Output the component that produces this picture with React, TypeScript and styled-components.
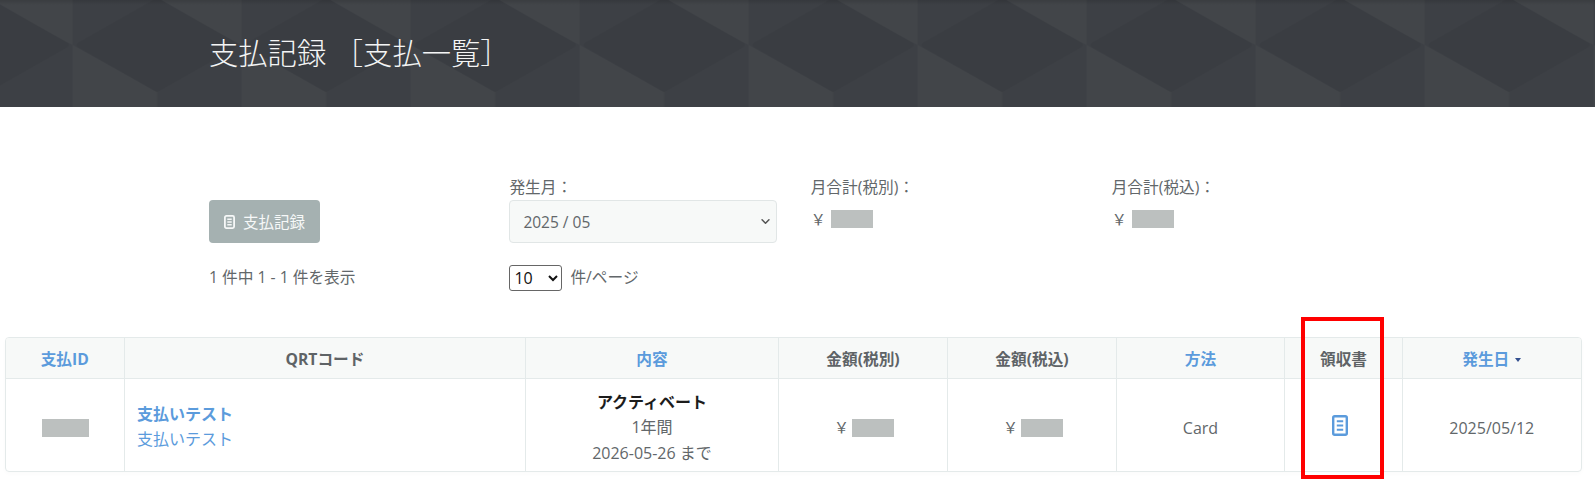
import React from "react";
import styled, { createGlobalStyle } from "styled-components";

const Global = createGlobalStyle`
  html { overflow: hidden; background: #fff; }
  html, body { margin: 0; padding: 0; }
  body { font-family: "Open Sans", "Noto Sans CJK JP", sans-serif; font-size: 16px; color: #62676a; }
`;

const Hero = styled.header`
  position: relative;
  height: 107px;
  background: #3d4045;
  display: flex;
  align-items: center;
  padding-left: 209px;
  overflow: hidden;
`;
const HeroPattern = styled.svg`
  position: absolute;
  inset: 0;
  width: 100%;
  height: 100%;
`;
const Title = styled.h1`
  position: relative;
  margin: 0;
  font-size: 29.3px;
  font-weight: 300;
  color: #f4f5f5;
  line-height: 1.2;
  white-space: pre;
`;

const Filters = styled.section`
  display: grid;
  grid-template-columns: 300.4px 301.3px 301px 301px;
  padding: 68px 0 0 209px;
`;
const Column = styled.div<{ $end?: boolean }>`
  display: flex;
  flex-direction: column;
  justify-content: ${(p) => (p.$end ? "flex-end" : "flex-start")};
  align-items: flex-start;
`;
const Label = styled.div`
  height: 25px;
  line-height: 24px;
  font-size: 15.7px;
`;
const RecordButton = styled.button`
  width: 111px;
  height: 43px;
  border: 0;
  border-radius: 4px;
  background: #a5b1b1;
  color: #f6f8f8;
  font: inherit;
  font-size: 15.5px;
  display: flex;
  align-items: center;
  justify-content: center;
  gap: 8px;
  padding: 0;
`;
const MonthSelect = styled.select`
  appearance: none;
  width: 268px;
  height: 43px;
  box-sizing: border-box;
  border: 1px solid #e1e6e6;
  border-radius: 4px;
  background-color: #f7f9f8;
  background-image: url("data:image/svg+xml,%3Csvg xmlns='http://www.w3.org/2000/svg' viewBox='0 0 16 16'%3E%3Cpath fill='none' stroke='%23555' stroke-width='2.2' stroke-linecap='round' stroke-linejoin='round' d='M3 5.5l5 5 5-5'/%3E%3C/svg%3E");
  background-repeat: no-repeat;
  background-position: right 5px center;
  background-size: 11px 11px;
  color: #62676a;
  font: inherit;
  font-size: 15.5px;
  padding: 0 13px;
`;
const Amount = styled.div`
  display: flex;
  align-items: center;
  height: 18px;
  margin-top: 10px;
`;
const Yen = styled.span<{ $gap?: number }>`
  font-size: 15px;
  line-height: 18px;
  margin-right: ${(p) => p.$gap ?? 5}px;
`;
const Redacted = styled.span<{ $w: number }>`
  display: inline-block;
  width: ${(p) => p.$w}px;
  height: 18px;
  background: #bcc0bf;
  vertical-align: middle;
`;

const Pager = styled.div`
  display: grid;
  grid-template-columns: 300.4px 1fr;
  align-items: center;
  padding: 22px 0 0 209px;
  height: 26px;
  font-size: 15.7px;
`;
const PageInfo = styled.div`
  margin-bottom: 3px;
`;
const PerPage = styled.div`
  display: flex;
  align-items: center;
  gap: 8px;
`;
const PerPageText = styled.span`
  margin-bottom: 3px;
`;
const SizeSelect = styled.select`
  width: 53px;
  height: 26px;
  font-size: 16px;
  font-family: inherit;
  color: #111;
  background: #fff;
  border: 1px solid #666;
  border-radius: 3px;
`;

const TableWrap = styled.div`
  position: relative;
  margin: 46px 0 0 4.5px;
  padding-bottom: 22px;
  width: 1575px;
`;
const Table = styled.table`
  width: 100%;
  table-layout: fixed;
  border-collapse: separate;
  border-spacing: 0;
  border: 1px solid #e4eaea;
  border-radius: 4px;
  box-sizing: border-box;
  overflow: hidden;
  box-shadow: 0 2px 4px rgba(0, 0, 0, 0.02);
`;
const Th = styled.th<{ $link?: boolean }>`
  height: 40px;
  padding: 0;
  background: #f7f9f8;
  font-size: 15.7px;
  font-weight: 700;
  color: ${(p) => (p.$link ? "#5b9bdc" : "#5e6366")};
  border-bottom: 1px solid #e4eaea;
  border-left: 1px solid #e4eaea;
  &:first-child { border-left: 0; }
`;
const Td = styled.td`
  height: 92px;
  box-sizing: border-box;
  padding: 6px 0 0;
  text-align: center;
  border-left: 1px solid #e4eaea;
  font-size: 16px;
  &:first-child { border-left: 0; }
`;
const NameCell = styled(Td)`
  padding: 4px 0 0 12px;
  text-align: left;
`;
const MaskedCell = styled(Td)`
  padding: 3px 0 0 2px;
`;
const IconCell = styled(Td)`
  padding-top: 5px;
`;
const CellLine = styled.div<{ $strong?: boolean; $link?: boolean }>`
  line-height: 25.5px;
  font-weight: ${(p) => (p.$strong ? 700 : 400)};
  color: ${(p) => (p.$link ? "#5b9bdc" : p.$strong ? "#1c1c1c" : "#62676a")};
`;
const Caret = styled.span`
  display: inline-block;
  width: 0;
  height: 0;
  margin-left: 6px;
  border-left: 3.5px solid transparent;
  border-right: 3.5px solid transparent;
  border-top: 4px solid #33508f;
  vertical-align: middle;
`;
const ReceiptLink = styled.a`
  display: inline-flex;
  margin-right: 7px;
  color: #5b9bdc;
`;
const Highlight = styled.div`
  position: absolute;
  left: 1296.5px;
  top: -20px;
  width: 83px;
  height: 162px;
  box-sizing: border-box;
  border: 4px solid #ff0000;
  pointer-events: none;
`;

const DocIcon = ({ w, h, sw }: { w: number; h: number; sw: number }) => (
  <svg width={w} height={h} viewBox={`0 0 ${w} ${h}`} fill="none" stroke="currentColor" strokeWidth={sw}>
    <rect x={sw / 2} y={sw / 2} width={w - sw} height={h - sw} rx={1.5} />
    <path d={`M${w * 0.3} ${h * 0.3}H${w * 0.7}M${w * 0.3} ${h * 0.5}H${w * 0.7}M${w * 0.3} ${h * 0.7}H${w * 0.7}`} strokeWidth={sw * 0.8} />
  </svg>
);

const columns: { label: string; width: number; link?: boolean; sort?: boolean }[] = [
  { label: "支払ID", width: 118.5, link: true },
  { label: "QRTコード", width: 401 },
  { label: "内容", width: 253, link: true },
  { label: "金額(税別)", width: 169 },
  { label: "金額(税込)", width: 169 },
  { label: "方法", width: 168, link: true },
  { label: "領収書", width: 118 },
  { label: "発生日", width: 178.5, link: true, sort: true },
];

export default function App() {
  return (
    <>
      <Global />
      <Hero>
        <HeroPattern aria-hidden="true">
          <defs>
            <pattern id="tile" x="72.6" y="0" width="169" height="107" patternUnits="userSpaceOnUse">
              <rect width="169" height="107" fill="#3d4045" />
              <path d="M84.5 0H169V45Z" fill="#424549" />
              <path d="M0 45L84.5 92V107H0Z" fill="#424549" />
              <path
                d="M84.5 1L162 45L84.5 89L7 45Z"
                fill="#3a3d42"
                stroke="#3a3d42"
                strokeWidth="6"
                strokeLinejoin="round"
              />
            </pattern>
            <linearGradient id="topShade" x1="0" y1="0" x2="0" y2="1">
              <stop offset="0" stopColor="#000" stopOpacity="0.12" />
              <stop offset="1" stopColor="#000" stopOpacity="0" />
            </linearGradient>
          </defs>
          <rect width="100%" height="107" fill="url(#tile)" />
          <rect width="100%" height="5" fill="url(#topShade)" />
        </HeroPattern>
        <Title>支払記録 ［支払一覧］</Title>
      </Hero>

      <Filters>
        <Column $end>
          <RecordButton>
            <DocIcon w={11} h={14} sw={1.8} />
            支払記録
          </RecordButton>
        </Column>
        <Column>
          <Label>発生月：</Label>
          <MonthSelect defaultValue="2025 / 05">
            <option>2025 / 05</option>
          </MonthSelect>
        </Column>
        <Column>
          <Label>月合計(税別)：</Label>
          <Amount>
            <Yen>￥</Yen>
            <Redacted $w={42} />
          </Amount>
        </Column>
        <Column>
          <Label>月合計(税込)：</Label>
          <Amount>
            <Yen>￥</Yen>
            <Redacted $w={42} />
          </Amount>
        </Column>
      </Filters>

      <Pager>
        <PageInfo>1 件中 1 - 1 件を表示</PageInfo>
        <PerPage>
          <SizeSelect defaultValue="10">
            <option>10</option>
          </SizeSelect>
          <PerPageText>件/ページ</PerPageText>
        </PerPage>
      </Pager>

      <TableWrap>
        <Table>
          <colgroup>
            {columns.map((c) => (
              <col key={c.label} style={{ width: c.width }} />
            ))}
          </colgroup>
          <thead>
            <tr>
              {columns.map((c) => (
                <Th key={c.label} $link={c.link}>
                  {c.label}
                  {c.sort && <Caret />}
                </Th>
              ))}
            </tr>
          </thead>
          <tbody>
            <tr>
              <MaskedCell>
                <Redacted $w={47} />
              </MaskedCell>
              <NameCell>
                <CellLine $strong $link>支払いテスト</CellLine>
                <CellLine $link>支払いテスト</CellLine>
              </NameCell>
              <Td>
                <CellLine $strong>アクティベート</CellLine>
                <CellLine>1年間</CellLine>
                <CellLine>2026-05-26 まで</CellLine>
              </Td>
              <MaskedCell>
                <Yen $gap={3}>￥</Yen>
                <Redacted $w={42} />
              </MaskedCell>
              <MaskedCell>
                <Yen $gap={3}>￥</Yen>
                <Redacted $w={42} />
              </MaskedCell>
              <Td>Card</Td>
              <IconCell>
                <ReceiptLink href="#">
                  <DocIcon w={16} h={21} sw={2.4} />
                </ReceiptLink>
              </IconCell>
              <Td>2025/05/12</Td>
            </tr>
          </tbody>
        </Table>
        <Highlight />
      </TableWrap>
    </>
  );
}
